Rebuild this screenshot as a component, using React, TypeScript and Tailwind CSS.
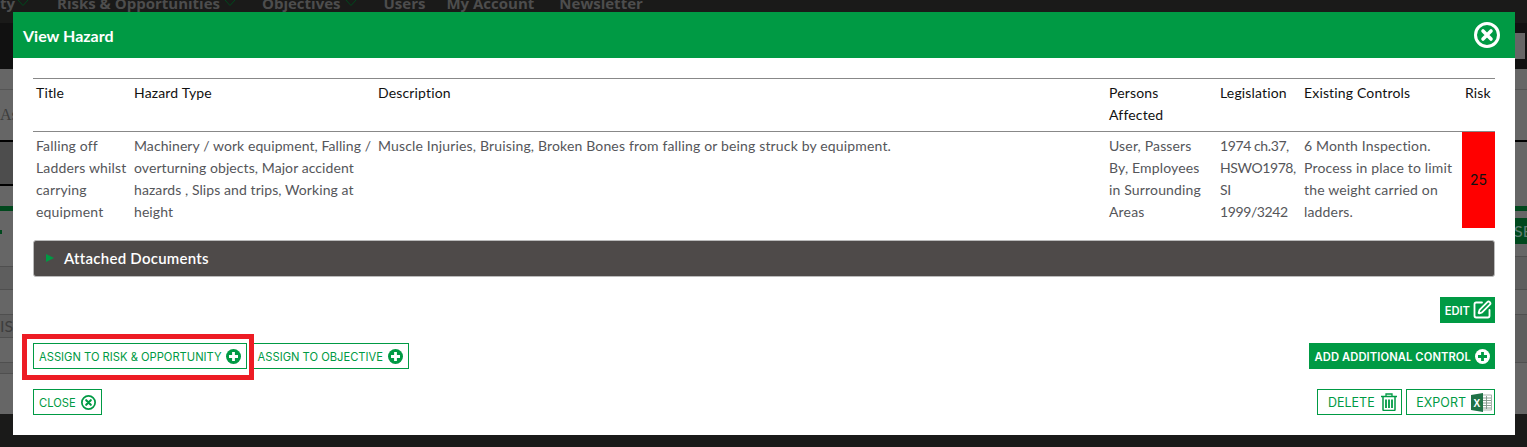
import { SquarePen } from "lucide-react";

const rows = [
  { w: "w-[98px]", head: "Title", body: "Falling off Ladders whilst carrying equipment" },
  { w: "w-[244px]", head: "Hazard Type", body: "Machinery / work equipment, Falling / overturning objects, Major accident hazards , Slips and trips, Working at height", bodyClass: "tracking-[0.08px]" },
  { w: "w-[731px]", head: "Description", body: "Muscle Injuries, Bruising, Broken Bones from falling or being struck by equipment." },
  { w: "w-[111px] pr-[6px]", head: "Persons Affected", body: "User, Passers By, Employees in Surrounding Areas" },
  { w: "w-[84px]", head: "Legislation", body: "1974 ch.37, HSWO1978, SI 1999/3242", bodyClass: "tracking-[-0.4px]" },
  { w: "w-[161px]", head: "Existing Controls", body: "6 Month Inspection. Process in place to limit the weight carried on ladders." },
];

type Band = { h: string; bg: string; text?: string; font?: string; dot?: boolean };

// bands of the page showing at each side of the overlay
const leftBands: Band[] = [
  { h: "h-[20px]", bg: "bg-[#666]" },
  { h: "h-[51px]", bg: "bg-[#666] border-t border-[#555]", text: "As", font: "font-['Liberation_Serif',serif] text-[#3d3d3d]" },
  { h: "h-[2px]", bg: "bg-black" },
  { h: "h-[42px]", bg: "bg-[#4d4d4d]" },
  { h: "h-[2px]", bg: "bg-black" },
  { h: "h-[20px]", bg: "bg-[#666]" },
  { h: "h-[5px]", bg: "bg-[#00481d]" },
  { h: "h-[55px]", bg: "bg-[#666]", dot: true },
  { h: "h-[23px]", bg: "bg-[#5e5e5e] border-t border-[#4f4f4f]" },
  { h: "h-[25px]", bg: "bg-[#666] border-t border-[#4f4f4f]" },
  { h: "h-[23px]", bg: "bg-[#5e5e5e] border-t border-[#4f4f4f]", text: "IS", font: "font-['Lato',sans-serif] text-[#3d3d3d]" },
  { h: "h-[25px]", bg: "bg-[#666] border-t border-[#4f4f4f]" },
  { h: "h-[11px]", bg: "bg-[#5e5e5e] border-t border-[#4f4f4f]" },
  { h: "h-[41px]", bg: "bg-[#666] border-t border-[#4f4f4f]" },
];

const rightBands: Band[] = [
  { h: "h-[20px]", bg: "bg-[#666]" },
  { h: "h-[51px]", bg: "bg-[#666] border-t border-[#555]" },
  { h: "h-[2px]", bg: "bg-black" },
  { h: "h-[64px]", bg: "bg-[#666]" },
  { h: "h-[5px]", bg: "bg-[#00481d]" },
  { h: "h-[7px]", bg: "bg-[#666]" },
  { h: "h-[26px]", bg: "bg-[#00481d]", text: "SE", font: "font-['Lato',sans-serif] text-[#5f7f73]" },
  { h: "h-[12px]", bg: "bg-[#666]" },
  { h: "h-[33px]", bg: "bg-[#5e5e5e] border-t border-[#4f4f4f]" },
  { h: "h-[25px]", bg: "bg-[#666] border-t border-[#4f4f4f]" },
  { h: "h-[48px]", bg: "bg-[#5e5e5e] border-t border-[#4f4f4f]" },
  { h: "h-[52px]", bg: "bg-[#666] border-t border-[#4f4f4f]" },
];

function Strip({ bands }: { bands: Band[] }) {
  return (
    <div className="flex flex-col w-[13px] overflow-hidden">
      {bands.map((b, i) => (
        <div
          key={i}
          className={`${b.h} ${b.bg} ${b.font ?? ""} flex items-center text-[16px] overflow-hidden whitespace-nowrap`}
        >
          {b.text}
          {b.dot && <span className="w-[2px] h-[4px] mb-[14px] bg-[#00481d]" />}
        </div>
      ))}
    </div>
  );
}

function Chevron() {
  return (
    <svg viewBox="0 0 12 7" className="w-[12px] h-[7px] ml-1 self-start mt-[5px] shrink-0 text-[#00481d]">
      <path d="M.5.5 6 6.500 11.500.5" fill="none" stroke="currentColor" strokeWidth="1" />
    </svg>
  );
}

function PlusIcon({ knock }: { knock: string }) {
  return (
    <svg viewBox="0 0 15 15" className="w-[15px] h-[15px] shrink-0">
      <circle cx="7.500" cy="7.500" r="7.500" fill="currentColor" />
      <path d="M7.500 3v9M3 7.500h9" stroke={knock} strokeWidth="2.800" />
    </svg>
  );
}

function CloseIcon({ className }: { className: string }) {
  return (
    <svg viewBox="0 0 26 26" className={className}>
      <circle cx="13" cy="13" r="11.500" fill="none" stroke="currentColor" strokeWidth="3" />
      <path d="M9 9l8 8M17 9l-8 8" stroke="currentColor" strokeWidth="3.600" strokeLinecap="round" />
    </svg>
  );
}

function TrashIcon() {
  return (
    <svg viewBox="0 0 16 18" className="w-[16px] h-[18px] shrink-0" fill="none" stroke="currentColor">
      <path d="M0 3.500h16" strokeWidth="1.500" />
      <path d="M5 3V1h6v2" strokeWidth="1.300" />
      <path d="M2 4v12.500a1 1 0 0 0 1 1h10a1 1 0 0 0 1-1V4" strokeWidth="1.500" />
      <path d="M5 6.500v8.500M8 6.500v8.500M11 6.500v8.500" strokeWidth="1.800" />
    </svg>
  );
}

function ExcelIcon() {
  return (
    <svg viewBox="0 0 21 19" className="w-[21px] h-[19px] shrink-0">
      <rect x="10" y="2" width="10.500" height="15" fill="#fff" stroke="#7f9488" strokeWidth="0.700" />
      <path d="M12 5h8M12 7.500h8M12 10h8M12 12.500h8M12 15h8M15.500 3v13" stroke="#7f9488" strokeWidth="0.900" />
      <path d="M0 2 12 0v19L0 17z" fill="#1f7246" />
      <text x="2.500" y="13.500" fill="#fff" fontSize="10" fontWeight="700" fontFamily="Liberation Sans, sans-serif">X</text>
    </svg>
  );
}

const outlineBtn = "h-[26px] border border-[#009a44] text-[#009a44] text-[11.200px] flex items-center whitespace-nowrap";
const solidBtn = "h-[26px] bg-[#009a44] text-white text-[11.200px] font-semibold flex items-center whitespace-nowrap";
const label = "mt-[2px]";

export default function App() {
  return (
    <div className="relative w-[1527px] h-[447px] overflow-hidden bg-[#1a1a19] font-['Lato',sans-serif]">
      {/* page behind the overlay */}
      <div className="h-[23px] overflow-hidden">
        <div className="flex items-center -mt-[6px] text-[15px] leading-[18px] font-bold text-[#4d4d4d] font-['Open_Sans',sans-serif] whitespace-nowrap">
          <span className="w-[13px] text-right">ty</span>
          <Chevron />
          <span className="ml-[28px]">Risks &amp; Opportunities</span>
          <Chevron />
          <span className="ml-[26px]">Objectives</span>
          <Chevron />
          <span className="ml-[27px]">Users</span>
          <span className="ml-[21px]">My Account</span>
          <span className="ml-[25px]">Newsletter</span>
        </div>
      </div>
      <div className="h-[46px] bg-[#111] flex justify-end">
        <div className="w-[10px] h-[26px] mt-[10px] mr-[2px] bg-[#666]" />
      </div>
      <div className="flex justify-between">
        <Strip bands={leftBands} />
        <Strip bands={rightBands} />
      </div>

      {/* modal */}
      <div className="absolute left-[13px] top-[12px] w-[1502px] h-[423px] bg-white flex flex-col">
        <div className="h-[46px] shrink-0 bg-[#009a44] flex items-center justify-between pl-[10px] pr-[15px] text-white">
          <h1 className="text-[16px] font-bold pt-[1px]">View Hazard</h1>
          <CloseIcon className="w-[26px] h-[26px]" />
        </div>

        <div className="flex-1 flex flex-col px-5 pt-5 text-[14px] tracking-[0.16px] leading-[22px]">
          <div className="flex border-t border-b border-[#888] h-[54px] text-[#111]">
            {rows.map((r) => (
              <div key={r.head} className={`${r.w} pl-[3px] pt-[3px]`}>{r.head}</div>
            ))}
            <div className="flex-1 pl-[3px] pt-[3px]">Risk</div>
          </div>
          <div className="flex text-[#55565a] h-[96px]">
            {rows.map((r) => (
              <div key={r.head} className={`${r.w} ${r.bodyClass ?? ""} pl-[3px] pt-[3px]`}>{r.body}</div>
            ))}
            <div className="flex-1 bg-[#ff0000] text-[#111] font-['Inter',sans-serif] tracking-normal flex items-center justify-center">25</div>
          </div>

          <div className="mt-3 h-[37px] shrink-0 rounded-[3px] bg-[#4e4a49] border border-[#bbb] flex items-center pl-3 pb-[2px] text-white font-semibold text-[15px] tracking-[0.25px]">
            <span className="w-0 h-0 border-y-[4.500px] border-y-transparent border-l-[8px] border-l-[#009a44] mr-[10px]" />
            Attached Documents
          </div>

          <div className="mt-5 flex justify-end font-['Inter',sans-serif] tracking-normal">
            <button className={`${solidBtn} pl-[5px] pr-[3px] gap-[2px]`}>
              <span className={label}>EDIT</span> <SquarePen className="w-[20px] h-[20px]" strokeWidth={2.2} />
            </button>
          </div>

          <div className="mt-5 flex items-center justify-between font-['Inter',sans-serif] tracking-normal">
            <div className="flex">
              <div className="relative">
                <button className={`${outlineBtn} pl-[5px] pr-[5px] gap-[4px]`}>
                  <span className={label}>ASSIGN TO RISK &amp; OPPORTUNITY</span> <PlusIcon knock="#fff" />
                </button>
                <div className="absolute -left-[11px] -top-[9px] -right-[7px] -bottom-[11px] border-[5px] border-[#ed1c24] pointer-events-none" />
              </div>
              <button className={`${outlineBtn} ml-[5px] pl-[5px] pr-[5px] gap-[5px]`}>
                <span className={label}>ASSIGN TO OBJECTIVE</span> <PlusIcon knock="#fff" />
              </button>
            </div>
            <button className={`${solidBtn} pl-[5px] pr-[5px] gap-[4px] tracking-[0.1px]`}>
              <span className={label}>ADD ADDITIONAL CONTROL</span> <PlusIcon knock="#009a44" />
            </button>
          </div>

          <div className="mt-5 flex items-center justify-between font-['Inter',sans-serif] tracking-normal">
            <button className={`${outlineBtn} pl-[5px] pr-[5px] gap-[5px]`}>
              <span className={label}>CLOSE</span> <CloseIcon className="w-[15px] h-[15px]" />
            </button>
            <div className="flex gap-1">
              <button className={`${outlineBtn} w-[85px] justify-start pl-[10px] gap-[6px] !text-[12.500px]`}>
                <span className={label}>DELETE</span> <TrashIcon />
              </button>
              <button className={`${outlineBtn} w-[89px] justify-end gap-[5px] pr-[2px] !text-[12.500px]`}>
                <span className={label}>EXPORT</span> <ExcelIcon />
              </button>
            </div>
          </div>
        </div>
      </div>
    </div>
  );
}
